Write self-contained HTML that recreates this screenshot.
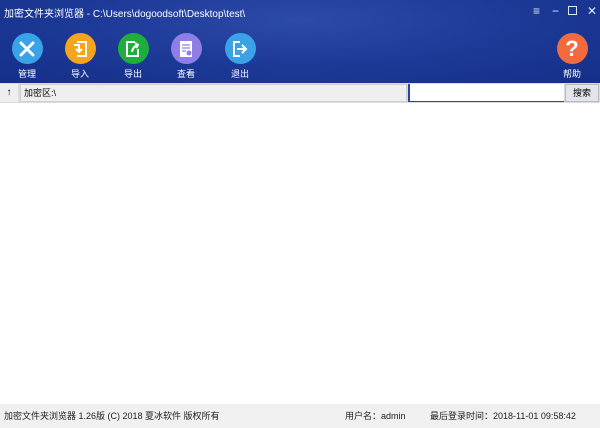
<!DOCTYPE html>
<html><head><meta charset="utf-8"><style>
*{margin:0;padding:0;box-sizing:border-box}
body{width:600px;height:428px;overflow:hidden;background:#fff;font-family:"Liberation Sans","Noto Sans CJK SC",sans-serif;position:relative}
.hdr{position:absolute;left:0;top:0;width:600px;height:83px;background:radial-gradient(ellipse at 300px 20px,#2c4aa8 0%,#1d3a98 50%,#142f88 100%)}
.title{position:absolute;left:4px;top:5px;color:#fff;font-size:10px}
.ctl{position:absolute;top:4px;color:#dfe6f7;font-size:12px}
.btn{position:absolute;top:33px;width:40px;text-align:center;color:#fff;font-size:9px}
.btn .c{width:31px;height:31px;border-radius:50%;margin:0 auto 3px;display:flex;align-items:center;justify-content:center}
.bar{position:absolute;top:83px;left:0;width:600px;height:20px;background:#dcdcdc}
.up{position:absolute;left:0;top:1px;width:18px;height:18px;background:#eee;font-size:10px;text-align:center;line-height:18px}
.path{position:absolute;left:20px;top:1px;width:387px;height:18px;background:#efefef;font-size:9px;line-height:16px;padding-left:3px;border:1px solid #cfcfcf}
.srch{position:absolute;left:408px;top:1px;width:156px;height:18px;background:#fff;border-left:2px solid #2a44a8;border-bottom:1px solid #2a44a8}
.sb{position:absolute;left:565px;top:1px;width:34px;height:18px;background:#e2e5ea;border:1px solid #bbb;font-size:9px;text-align:center;line-height:16px}
.ft{position:absolute;left:0;top:404px;width:600px;height:24px;background:#f0f0f0;font-size:9px;color:#222;line-height:24px}
</style></head><body>
<div class="hdr">
<div class="title">加密文件夹浏览器 - C:\Users\dogoodsoft\Desktop\test\</div>
<div class="ctl" style="left:533px">≡</div><div class="ctl" style="left:552px">−</div>
<div class="ctl" style="left:568px;top:6px;width:9px;height:9px;border:1.5px solid #dfe6f7"></div>
<div class="ctl" style="left:587px">✕</div>
<div class="btn" style="left:7px"><div class="c" style="background:#3aa3e8"><svg width="18" height="18" viewBox="0 0 18 18" stroke="#fff" stroke-width="3" stroke-linecap="round"><path d="M3 3L15 15M15 3L3 15"/></svg></div>管理</div>
<div class="btn" style="left:60px"><div class="c" style="background:#f5a51c"><svg width="16" height="18" viewBox="0 0 16 18" fill="none" stroke="#fff" stroke-width="2"><path d="M5 2H14V16H5"/><path d="M2 5H7V11M4 9L7 12L10 9"/></svg></div>导入</div>
<div class="btn" style="left:113px"><div class="c" style="background:#1fae3c"><svg width="16" height="18" viewBox="0 0 16 18" fill="none" stroke="#fff" stroke-width="2"><path d="M10 2H2V16H13V9"/><path d="M7 12Q8 6 13 5M10 3L13 5L11 8"/></svg></div>导出</div>
<div class="btn" style="left:166px"><div class="c" style="background:#8e7ee6"><svg width="14" height="18" viewBox="0 0 14 18"><rect x="1" y="1" width="12" height="16" fill="#fff"/><path d="M3 5H11M3 8H11M3 11H7" stroke="#8e7ee6" stroke-width="1.2"/><circle cx="10" cy="13" r="2.5" fill="#8e7ee6"/></svg></div>查看</div>
<div class="btn" style="left:220px"><div class="c" style="background:#3aa3e8"><svg width="18" height="18" viewBox="0 0 18 18" fill="none" stroke="#fff" stroke-width="2"><path d="M9 2H3V16H9"/><path d="M6 9H15M11 5L15 9L11 13"/></svg></div>退出</div>
<div class="btn" style="left:552px"><div class="c" style="background:#f26a3e;font-size:22px;font-weight:bold">?</div>帮助</div>
</div>
<div class="bar"><div class="up">↑</div><div class="path">加密区:\</div><div class="srch"></div><div class="sb">搜索</div></div>
<div class="ft"><span style="position:absolute;left:4px">加密文件夹浏览器 1.26版 (C) 2018 夏冰软件 版权所有</span><span style="position:absolute;left:345px">用户名：admin</span><span style="position:absolute;left:430px">最后登录时间：2018-11-01 09:58:42</span></div>
</body></html>
